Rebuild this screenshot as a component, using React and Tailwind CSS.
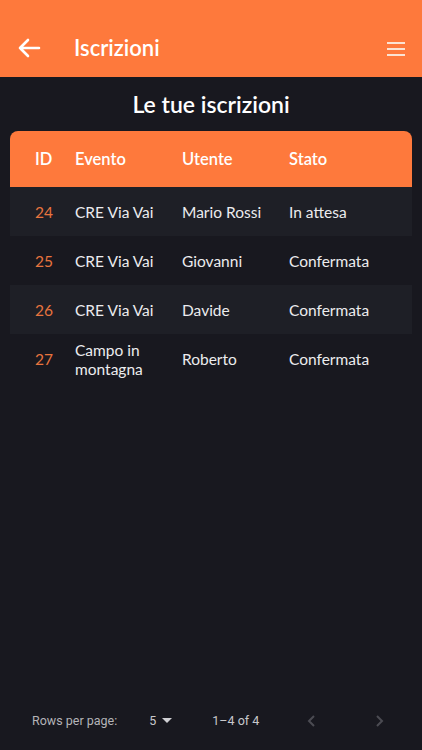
import React from "react";

const rows = [
    { id: 24, evento: "CRE Via Vai", utente: "Mario Rossi", stato: "In attesa" },
    { id: 25, evento: "CRE Via Vai", utente: "Giovanni", stato: "Confermata" },
    { id: 26, evento: "CRE Via Vai", utente: "Davide", stato: "Confermata" },
    { id: 27, evento: "Campo in montagna", utente: "Roberto", stato: "Confermata" },
];

const App = () => {
    return (
        <div className="w-[422px] h-[750px] bg-[#18181f] flex flex-col font-['Lato','Noto_Sans',sans-serif]">
            <header className="h-[77px] bg-[#fe793c] flex items-end pb-[17px] px-[17px] shrink-0">
                <svg width="24" height="20" viewBox="0 0 24 20" fill="none" stroke="white" strokeWidth="2.6" strokeLinecap="round" strokeLinejoin="round" className="mb-[2px]">
                    <path d="M22 10H3M11 2L3 10l8 8" />
                </svg>
                <h1 className="ml-[33px] text-white text-[22px] font-semibold leading-none mb-[1px]">Iscrizioni</h1>
                <div className="ml-auto flex flex-col gap-[4px] mb-[4px]">
                    <span className="block w-[18px] h-[2px] bg-[#fbe3d3]" />
                    <span className="block w-[18px] h-[2px] bg-[#fbe3d3]" />
                    <span className="block w-[18px] h-[2px] bg-[#fbe3d3]" />
                </div>
            </header>

            <h2 className="text-center text-white text-[23px] font-semibold mt-[14px] leading-[26px]">Le tue iscrizioni</h2>

            <div className="mx-[10px] mt-[14px] rounded-t-[8px] overflow-hidden">
                <div className="bg-[#fe793c] h-[56px] flex items-center text-white text-[16.5px] font-semibold pt-[1px]">
                    <div className="w-[65px] pl-[25px]">ID</div>
                    <div className="w-[107px]">Evento</div>
                    <div className="w-[107px]">Utente</div>
                    <div>Stato</div>
                </div>
                {rows.map((r, i) => (
                    <div key={r.id} className={`h-[49px] flex items-center text-[15.5px] text-[#ececee] pt-[2px] ${i % 2 === 0 ? "bg-[#1e1f26]" : "bg-[#18181f]"}`}>
                        <div className="w-[65px] pl-[25px] text-[#e8743e]">{r.id}</div>
                        <div className="w-[107px] leading-[19px] pr-[20px]">{r.evento}</div>
                        <div className="w-[107px]">{r.utente}</div>
                        <div>{r.stato}</div>
                    </div>
                ))}
            </div>

            <div className="mt-auto h-[60px] flex items-center text-[12.5px] text-[#b4b4b8] font-['Roboto',sans-serif] pt-[2px]">
                <span className="ml-[32px]">Rows per page:</span>
                <span className="ml-[32px] text-[#c8c8cc]">5</span>
                <svg width="10" height="6" viewBox="0 0 10 6" className="ml-[6px]">
                    <path d="M0 0h10L5 5z" fill="#d0d0d4" />
                </svg>
                <span className="ml-[40px] text-[#c8c8cc]">1–4 of 4</span>
                <svg width="10" height="14" viewBox="0 0 10 14" fill="none" stroke="#4b4b52" strokeWidth="2" className="ml-[47px]">
                    <path d="M8 2L3 7l5 5" />
                </svg>
                <svg width="10" height="14" viewBox="0 0 10 14" fill="none" stroke="#4b4b52" strokeWidth="2" className="ml-[59px]">
                    <path d="M2 2l5 5-5 5" />
                </svg>
            </div>
        </div>
    );
};

export default App;
